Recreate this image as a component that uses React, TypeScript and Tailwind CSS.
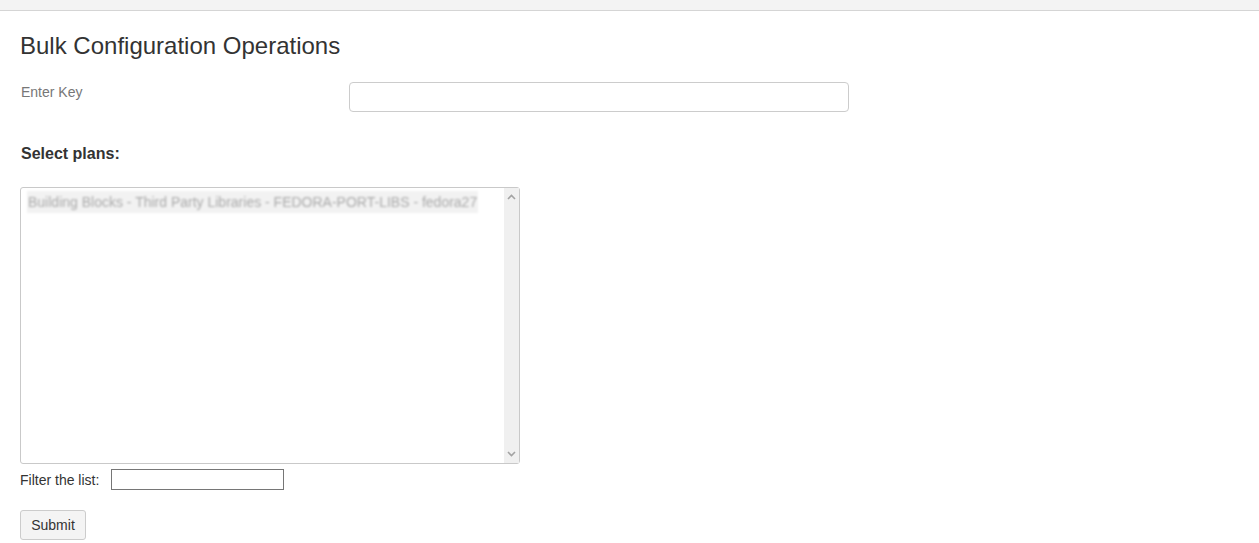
const plans = ["Building Blocks - Third Party Libraries - FEDORA-PORT-LIBS - fedora27"];

const Chevron = ({ down }: { down?: boolean }) => (
  <svg width="9" height="6" viewBox="0 0 9 6" className={down ? "rotate-180" : ""}>
    <path d="M1 5 L4.5 1.5 L8 5" fill="none" stroke="#a3a3a3" strokeWidth="1.6" />
  </svg>
);

export default function App() {
  return (
    <div className="min-h-[543px] bg-white font-['Liberation_Sans',Arial,sans-serif] text-[14px] leading-5 text-[#333]">
      <div className="h-[11px] border-b border-[#d5d5d5] bg-[#f3f3f3]" />
      <div className="px-5">
        <h3 className="mt-[22px] text-[24px] leading-[26px] font-normal text-[#333]">
          Bulk Configuration Operations
        </h3>

        <div className="mt-[23px] flex items-start">
          <label className="w-[329px] pl-px text-[#777]">Enter Key</label>
          <input
            type="text"
            className="h-[30px] w-[500px] rounded-[4px] border border-[#ccc] bg-white px-3 outline-none"
          />
        </div>

        <div className="mt-[32px] pl-px text-[16px] font-bold">Select plans:</div>

        <div className="mt-[23px] flex h-[277px] w-[500px] rounded-[3px] border border-[#c9c9c9]">
          <div className="flex-1 px-[6px] pt-[3px]">
            {plans.map((p, i) => (
              <div key={i} className="inline-block bg-[#f2f2f2] px-px py-[1px] text-[#aaa] blur-[0.8px]">
                {p}
              </div>
            ))}
          </div>
          <div className="flex w-[15px] flex-col items-center justify-between bg-[#f0f0f0] py-[6px]">
            <Chevron />
            <Chevron down />
          </div>
        </div>

        <div className="mt-[5px] flex items-center">
          <span className="mr-[12px]">Filter the list:</span>
          <input
            type="text"
            className="h-[21px] w-[173px] border border-[#767676] bg-white px-1 outline-none"
          />
        </div>

        <button className="mt-[20px] h-[30px] w-[66px] rounded-[3px] border border-[#ccc] bg-[#f4f4f4] text-[14px] text-[#333]">
          Submit
        </button>
      </div>
    </div>
  );
}
